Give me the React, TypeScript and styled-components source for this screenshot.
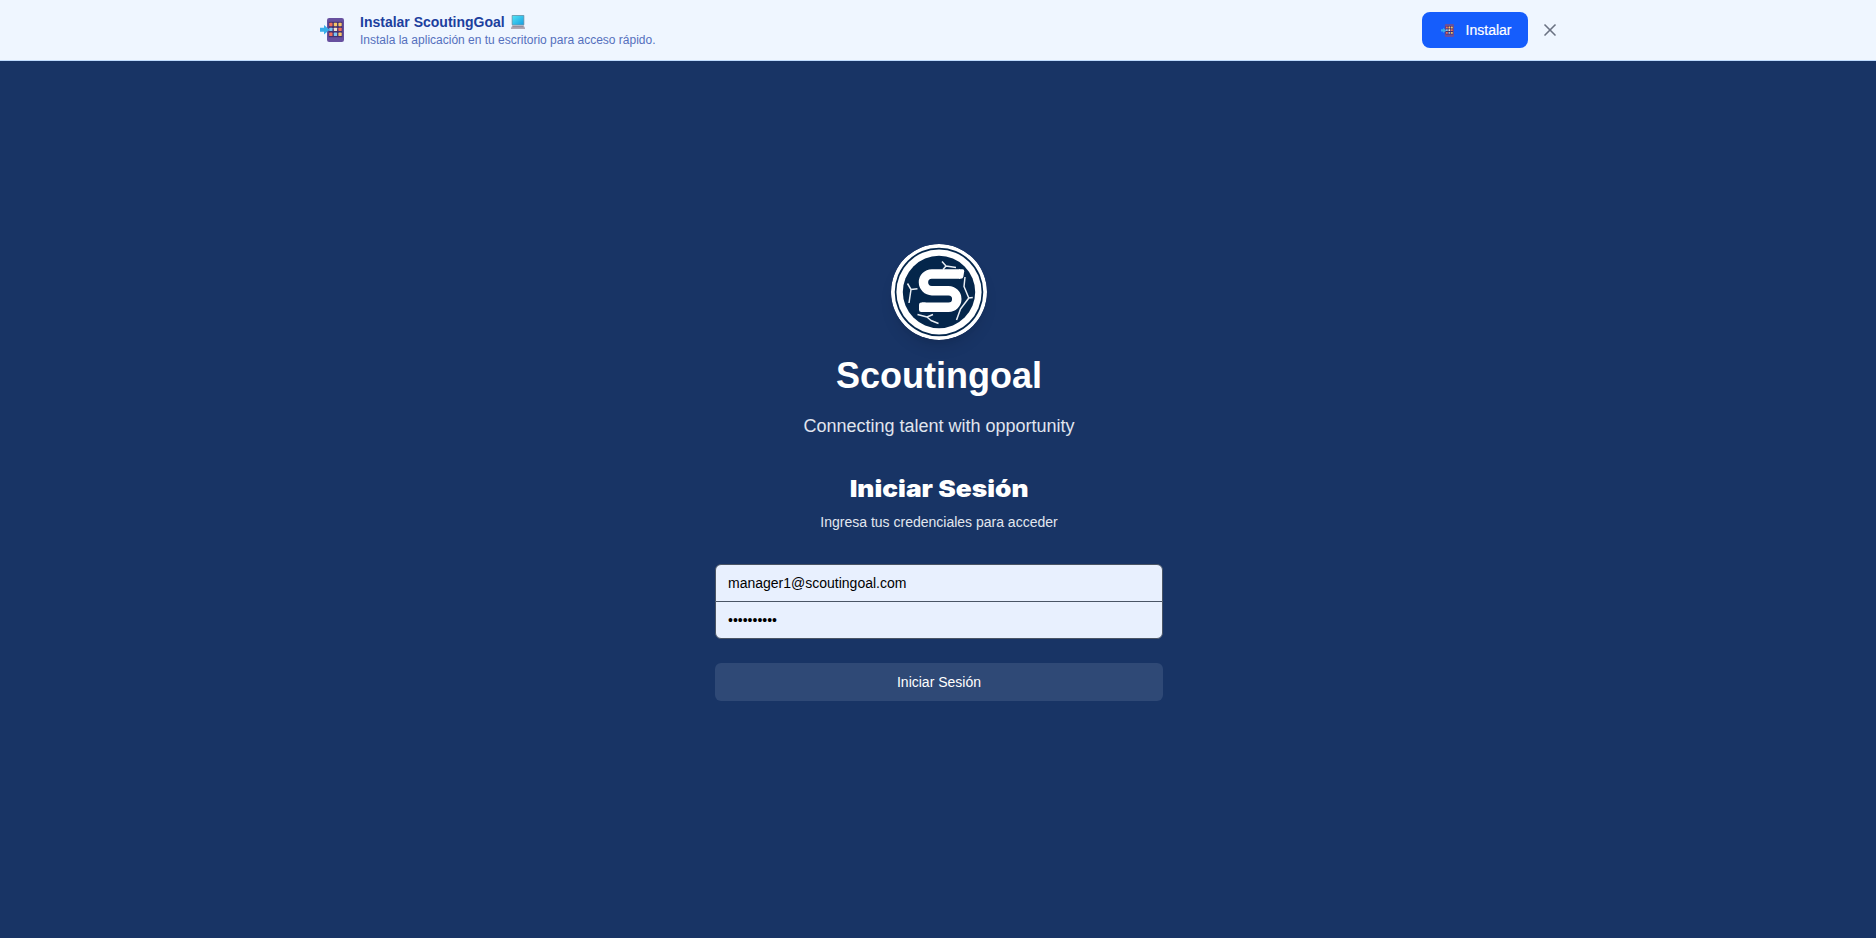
import React from "react";
import styled, { createGlobalStyle } from "styled-components";
import { X } from "lucide-react";

const GlobalStyle = createGlobalStyle`
  *, *::before, *::after { box-sizing: border-box; }
  body { margin: 0; background: #183465; font-family: "Liberation Sans", Arial, sans-serif; }
  h1, h2, p { margin: 0; }
  button, input { font-family: inherit; }
`;

const Page = styled.div`
  min-height: 100vh;
  display: flex;
  flex-direction: column;
  background: #183465;
`;

const Banner = styled.header`
  padding: 12px 0 12px 3px;
  height: 61px;
  background: #eff6ff;
  border-bottom: 1px solid #bedbff;
`;

const BannerInner = styled.div`
  max-width: 1280px;
  height: 36px;
  margin: 0 auto;
  padding: 0 16px;
  display: flex;
  align-items: center;
  justify-content: space-between;
`;

const Group = styled.div<{ $gap: number }>`
  display: flex;
  align-items: center;
  gap: ${({ $gap }) => $gap}px;
`;

const IconSlot = styled.span<{ $width: number }>`
  width: ${({ $width }) => $width}px;
  display: inline-flex;
  justify-content: center;
  flex: none;
`;

const BannerTitle = styled.p`
  display: flex;
  align-items: center;
  gap: 6px;
  font-size: 14px;
  line-height: 20px;
  font-weight: 700;
  color: #1c3f9e;
`;

const BannerText = styled.p`
  font-size: 12px;
  line-height: 16px;
  color: #5570bd;
`;

const InstallButton = styled.button`
  height: 36px;
  padding: 0 16px;
  display: flex;
  align-items: center;
  gap: 8px;
  border: 0;
  border-radius: 8px;
  background: #155dfc;
  color: #fff;
  font-size: 14px;
  line-height: 20px;
  -webkit-text-stroke: 0.2px #fff;
`;

const CloseButton = styled.button`
  display: flex;
  padding: 4px;
  border: 0;
  background: transparent;
  color: #6a7282;
`;

const Content = styled.div`
  padding-left: 2px;
`;

const Main = styled.main`
  width: 448px;
  margin: 183px auto 0;
  display: flex;
  flex-direction: column;
  align-items: center;
  color: #fff;
  text-align: center;
`;

const Logo = styled.svg`
  display: block;
  width: 96px;
  height: 96px;
  border-radius: 50%;
  box-shadow: 0 10px 15px -3px rgba(0, 0, 0, 0.1), 0 4px 6px -4px rgba(0, 0, 0, 0.1);
`;

const Brand = styled.h1`
  margin-top: 16px;
  font-size: 36px;
  line-height: 40px;
  font-weight: 700;
`;

const Tagline = styled.p`
  margin-top: 16px;
  font-size: 18px;
  line-height: 28px;
  color: #e0e5ee;
`;

const FormTitle = styled.h2`
  margin-top: 32px;
  font-family: Inter, "Liberation Sans", sans-serif;
  font-size: 23px;
  line-height: 32px;
  font-weight: 900;
  transform: translateY(1px) scaleX(1.145);
`;

const FormHint = styled.p`
  margin-top: 8px;
  font-size: 14px;
  line-height: 20px;
  color: #e2e7ef;
`;

const Form = styled.form`
  width: 100%;
  margin-top: 32px;
`;

const Field = styled.input<{ $last?: boolean }>`
  display: block;
  width: 100%;
  height: 38px;
  margin-top: ${({ $last }) => ($last ? "-1px" : "0")};
  padding: 8px 12px;
  border: 1px solid #4a5565;
  border-radius: ${({ $last }) => ($last ? "0 0 6px 6px" : "6px 6px 0 0")};
  background: #e8f0fe;
  color: #000;
  font-size: 14px;
  line-height: 20px;
  outline: none;
`;

const SubmitButton = styled.button`
  width: 100%;
  height: 38px;
  margin-top: 24px;
  border: 0;
  border-radius: 6px;
  background: #2f4976;
  color: #fff;
  font-size: 14px;
  line-height: 20px;
`;

const keyColors = ["#f0705c", "#f6c667", "#f6c667", "#7cc4f4", "#f4e3d0", "#f0705c", "#f0705c", "#7cc4f4", "#f6c667"];

function PhoneIcon({ size }: { size: number }) {
  return (
    <svg width={size} height={size} viewBox="0 0 24 24">
      <rect x="7" y="0" width="17" height="24" rx="2.2" fill="#67509f" />
      <rect x="8.6" y="3.8" width="13.8" height="15.4" fill="#44306f" />
      {keyColors.map((color, i) => (
        <rect key={i} x={9.2 + (i % 3) * 4.6} y={4.8 + Math.floor(i / 3) * 4.9} width="3.3" height="3.4" rx="0.6" fill={color} />
      ))}
      <path d="M0 9.8h4V7l5.6 4.8L4 16.6v-2.8H0z" fill="#38aee9" />
    </svg>
  );
}

function LaptopIcon() {
  return (
    <svg width="14" height="14" viewBox="0 0 14 14">
      <defs>
        <linearGradient id="screen" x1="0" y1="0" x2="1" y2="1">
          <stop offset="0" stopColor="#4fe3f4" />
          <stop offset="1" stopColor="#1aa0e2" />
        </linearGradient>
      </defs>
      <rect x="0.7" y="0" width="12.6" height="10.4" rx="0.8" fill="#7796a9" />
      <rect x="1.5" y="0.8" width="11" height="8.8" fill="url(#screen)" />
      <path d="M1.3 10.4h11.4L14 13v1H0v-1z" fill="#b0a8b4" />
      <path d="M2 11.2h10l.5 1h-11z" fill="#8d8998" />
    </svg>
  );
}

function BrandLogo() {
  return (
    <Logo viewBox="0 0 96 96">
      <circle cx="48" cy="48" r="48" fill="#fff" />
      <circle cx="48" cy="48" r="44.3" fill="#04264b" />
      <circle cx="48" cy="48" r="42.6" fill="#fff" />
      <circle cx="48" cy="48" r="36.2" fill="#04264b" />
      <g fill="none" stroke="#e8eef4" strokeWidth="1.5" strokeLinejoin="round">
        <path d="M51 17.500l4 4.500 10 1.500M55 22l-3 3.500" />
        <path d="M16.500 39.500l3.500 6-2 13.500M20 45.500l6.500-.8" />
        <path d="M26.500 70.500l9.500 2.500 6-2.500M36 73l4 3.500 7.500 3" />
        <path d="M74 33l-1 9.500 4.800 11.500-8.300 11-4 11M77.800 54l4-.5" />
      </g>
      <path
        d="M69 30H40.800a8.300 8.300 0 0 0 0 16.700h16.700a8.300 8.300 0 0 1 0 16.600H31"
        fill="none"
        stroke="#fff"
        strokeWidth="9.400"
      />
      <path d="M68 25.300h3.500q2 0 1.700 2l-.8 5.200q-.4 2.200-2.600 2.200H68z" fill="#fff" />
      <rect x="28" y="58.600" width="8" height="9.400" rx="2.200" fill="#fff" />
    </Logo>
  );
}

export default function App() {
  return (
    <Page>
      <GlobalStyle />
      <Banner>
        <BannerInner>
          <Group $gap={12}>
            <IconSlot $width={32.5}>
              <PhoneIcon size={24} />
            </IconSlot>
            <div>
              <BannerTitle>
                Instalar ScoutingGoal <LaptopIcon />
              </BannerTitle>
              <BannerText>Instala la aplicación en tu escritorio para acceso rápido.</BannerText>
            </div>
          </Group>
          <Group $gap={8}>
            <InstallButton type="button">
              <IconSlot $width={20}>
                <PhoneIcon size={13} />
              </IconSlot>
              Instalar
            </InstallButton>
            <CloseButton type="button" aria-label="Cerrar">
              <X size={20} />
            </CloseButton>
          </Group>
        </BannerInner>
      </Banner>
      <Content>
        <Main>
          <BrandLogo />
          <Brand>Scoutingoal</Brand>
          <Tagline>Connecting talent with opportunity</Tagline>
          <FormTitle>Iniciar Sesión</FormTitle>
          <FormHint>Ingresa tus credenciales para acceder</FormHint>
          <Form onSubmit={(e) => e.preventDefault()}>
            <Field type="email" defaultValue="manager1@scoutingoal.com" aria-label="Email" />
            <Field $last type="password" defaultValue="scouting10" aria-label="Contraseña" />
            <SubmitButton type="submit">Iniciar Sesión</SubmitButton>
          </Form>
        </Main>
      </Content>
    </Page>
  );
}
